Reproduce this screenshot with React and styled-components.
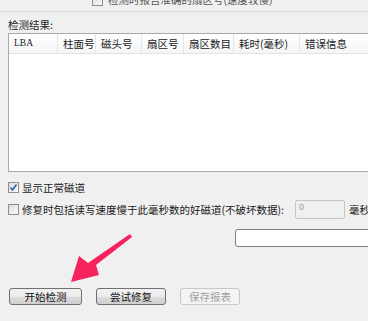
import React from 'react';
import styled, { createGlobalStyle } from 'styled-components';

const GlobalStyle = createGlobalStyle`
  html, body {
    margin: 0;
    padding: 0;
    background: #ffffff;
  }
  body {
    font-family: "Noto Sans CJK SC", "Liberation Sans", sans-serif;
    font-size: 10.5px;
    color: #1a1a1a;
  }
`;

const Window = styled.div`
  position: relative;
  width: 368px;
  height: 321px;
  background: #f0f0f0;
  overflow: hidden;
  display: flex;
  flex-direction: column;
`;

const TopStrip = styled.div`
  height: 11px;
  border-bottom: 1px solid #dadada;
  overflow: hidden;
  display: flex;
  align-items: flex-end;
  padding-left: 92px;
`;

const ClippedOption = styled.div`
  display: flex;
  align-items: center;
  gap: 4px;
  margin-bottom: 4px;
  color: #555;
  line-height: 14px;
  white-space: nowrap;
`;

const Section = styled.div`
  padding-left: 8px;
  display: flex;
  flex-direction: column;
`;

const Label = styled.div`
  height: 14px;
  line-height: 14px;
  margin-top: 6px;
  margin-bottom: 1px;
`;

const Table = styled.div`
  width: 380px;
  height: 137px;
  background: #fff;
  border: 1px solid #a9a9a9;
`;

const HeaderRow = styled.div`
  display: flex;
  height: 19px;
  background: linear-gradient(#ffffff, #f4f5f7);
  border-bottom: 1px solid #e3e3e3;
`;

const HeaderCell = styled.div`
  width: ${({ $w }) => $w}px;
  flex: none;
  padding-left: 5px;
  box-sizing: border-box;
  line-height: 19px;
  border-right: 1px solid #e6e6e6;
  font-family: ${({ $latin }) =>
    $latin ? '"Liberation Serif", serif' : '"Noto Sans CJK SC", sans-serif'};
  font-size: ${({ $latin }) => ($latin ? '9.5px' : '10.5px')};
  color: #222;
  white-space: nowrap;
`;

const CheckRow = styled.div`
  display: flex;
  align-items: center;
  gap: 2px;
  height: 20px;
  margin-top: ${({ $mt }) => $mt}px;
  white-space: nowrap;
`;

const OptionText = styled.span`
  flex: none;
  width: ${({ $w }) => ($w ? `${$w}px` : 'auto')};
`;

const Box = styled.span`
  width: 11px;
  height: 11px;
  flex: none;
  box-sizing: border-box;
  border: 1px solid #8f8f8f;
  background: linear-gradient(135deg, #dcdcdc, #fbfbfb);
  display: inline-flex;
  align-items: center;
  justify-content: center;
  margin-right: 1px;
`;

const SmallInput = styled.div`
  width: 50px;
  height: 19px;
  box-sizing: border-box;
  border: 1px solid #c5c5c5;
  border-radius: 2px;
  background: #f0f0f0;
  color: #9a9a9a;
  font-family: "Liberation Sans", sans-serif;
  font-size: 9px;
  line-height: 13px;
  padding-left: 3px;
  margin-right: 2px;
  flex: none;
`;

const WideInput = styled.div`
  width: 150px;
  height: 16px;
  margin-top: 10px;
  margin-left: 227px;
  background: #fff;
  border: 1px solid #7f7f7f;
  border-radius: 3px;
`;

const ButtonRow = styled.div`
  display: flex;
  gap: 14px;
  margin-top: 41px;
  padding-left: 1px;
`;

const Button = styled.div`
  width: ${({ $w }) => $w}px;
  height: 17px;
  box-sizing: border-box;
  border: 1px solid ${({ $disabled }) => ($disabled ? '#c8c8c8' : '#707070')};
  border-radius: 3px;
  background: ${({ $disabled }) =>
    $disabled ? '#f4f4f4' : 'linear-gradient(#f2f2f2 0%, #ebebeb 50%, #dddddd 51%, #cfcfcf 100%)'};
  color: ${({ $disabled }) => ($disabled ? '#a0a0a0' : '#111')};
  display: flex;
  align-items: center;
  justify-content: center;
  line-height: 15px;
`;

const Arrow = styled.svg`
  position: absolute;
  left: 60px;
  top: 228px;
`;

const Check = () => (
  <svg width="9" height="9" viewBox="0 0 9 9">
    <path d="M1.5 4.5 L3.5 7 L7.5 1.5" stroke="#2f5ea8" strokeWidth="1.6" fill="none" />
  </svg>
);

const columns = [
  { label: 'LBA', w: 49, latin: true },
  { label: '柱面号', w: 38 },
  { label: '磁头号', w: 46 },
  { label: '扇区号', w: 42 },
  { label: '扇区数目', w: 50 },
  { label: '耗时(毫秒)', w: 66 },
  { label: '错误信息', w: 90 },
];

export default function App() {
  return (
    <>
      <GlobalStyle />
      <Window>
        <TopStrip>
          <ClippedOption>
            <Box />
            检测时报告准确的扇区号(速度较慢)
          </ClippedOption>
        </TopStrip>
        <Section>
          <Label>检测结果:</Label>
          <Table>
            <HeaderRow>
              {columns.map((c) => (
                <HeaderCell key={c.label} $w={c.w} $latin={c.latin}>
                  {c.label}
                </HeaderCell>
              ))}
            </HeaderRow>
          </Table>
          <CheckRow $mt={5}>
            <Box>
              <Check />
            </Box>
            <OptionText>显示正常磁道</OptionText>
          </CheckRow>
          <CheckRow $mt={2}>
            <Box />
            <OptionText $w={271}>修复时包括读写速度慢于此毫秒数的好磁道(不破坏数据):</OptionText>
            <SmallInput>0</SmallInput>
            <OptionText>毫秒</OptionText>
          </CheckRow>
          <WideInput />
          <ButtonRow>
            <Button $w={73}>开始检测</Button>
            <Button $w={70}>尝试修复</Button>
            <Button $w={60} $disabled>保存报表</Button>
          </ButtonRow>
        </Section>
        <Arrow width="80" height="60" viewBox="0 0 80 60">
          <path
            d="M70 6 L72 9 L36 37 L39 47 L11 54 L19 28 L28 35 Z"
            fill="#f5225c"
          />
        </Arrow>
      </Window>
    </>
  );
}
